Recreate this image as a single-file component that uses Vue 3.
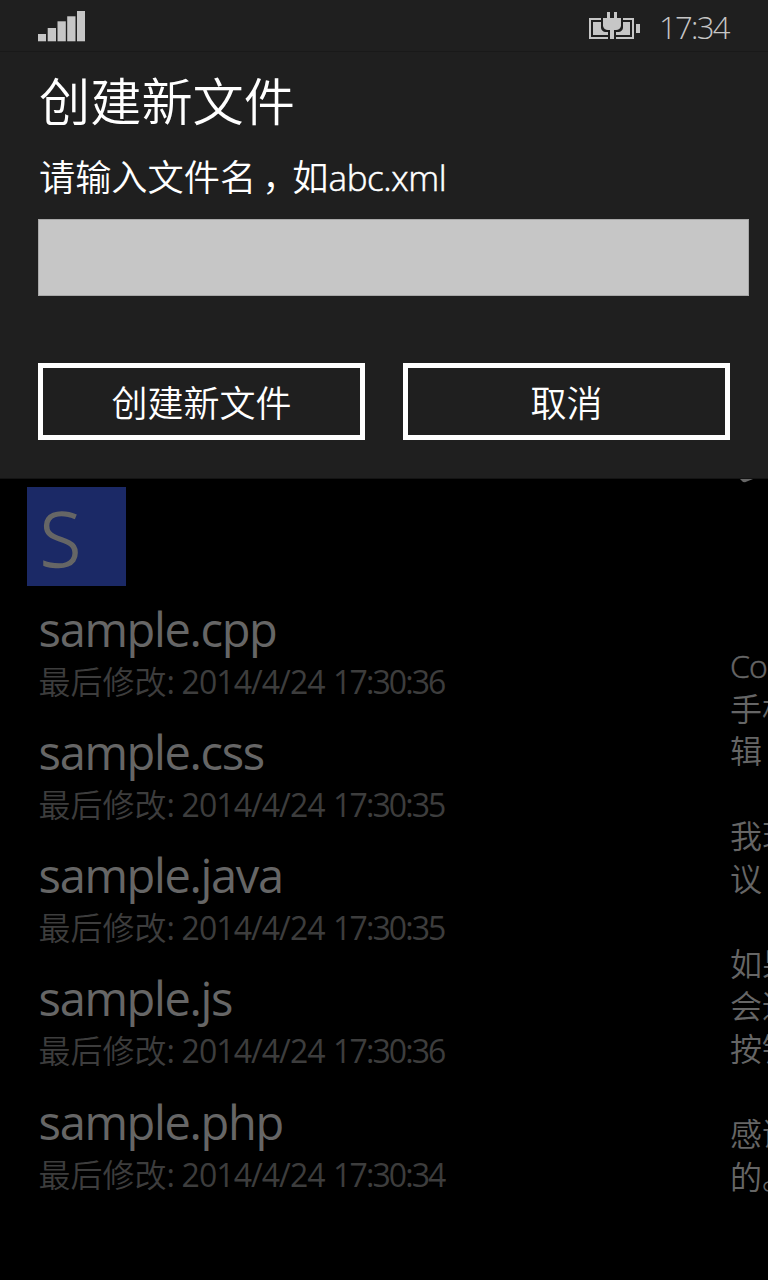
<script setup>
const files = [
  { name: 'sample.cpp', date: '2014/4/24', time: '17:30:36' },
  { name: 'sample.css', date: '2014/4/24', time: '17:30:35' },
  { name: 'sample.java', date: '2014/4/24', time: '17:30:35' },
  { name: 'sample.js', date: '2014/4/24', time: '17:30:36' },
  { name: 'sample.php', date: '2014/4/24', time: '17:30:34' },
]
const about = ['Co', '手机', '辑', '', '我现', '议', '', '如果', '会通', '按钮', '', '感谢', '的。']
</script>

<template>
  <div class="screen">
    <section class="dialog">
      <header class="status">
        <svg class="signal" width="48" height="32" viewBox="0 0 48 32">
          <g fill="#c6c6c6">
            <rect x="0" y="24" width="8" height="7.3" />
            <rect x="9.7" y="18" width="8.3" height="13.3" />
            <rect x="19.5" y="11.3" width="8.3" height="20" />
            <rect x="29.2" y="6.3" width="8.3" height="25" />
            <rect x="39" y="1" width="8" height="30.3" />
          </g>
        </svg>
        <svg class="battery" width="52" height="28" viewBox="0 0 52 28">
          <g fill="#c6c6c6">
            <path d="M0 6H12V8H2V25H19V27H0Z" />
            <path d="M34 6H45V27H27V25H43V8H34Z" />
            <path d="M4 10H12V16Q12.500 19 16 20H19V23H4Z" />
            <path d="M34 10H41V23H27V20H30Q33.500 19 34 16Z" />
            <path d="M18 0H21V6H25V0H28V6H32V14Q31 18 27 18H25V27H21V18H19Q15 18 14 14V6H18Z" />
            <rect x="47" y="12" width="4" height="9" />
          </g>
        </svg>
        <span class="clock">17:34</span>
      </header>
      <h1>创建新文件</h1>
      <p class="hint">请输入文件名<span class="comma">，</span>如<span class="latin">abc.xml</span></p>
      <input class="field" type="text" aria-label="文件名" />
      <div class="actions">
        <button>创建新文件</button>
        <button>取消</button>
      </div>
    </section>

    <main class="page">
      <div class="files">
        <div class="group">S</div>
        <ul>
          <li v-for="f in files" :key="f.name">
            <div class="name">{{ f.name }}</div>
            <div class="meta">
              <span class="label">最后修改<b>:</b></span>
              <span class="date">{{ f.date }}</span>
              <span class="time">{{ f.time }}</span>
            </div>
          </li>
        </ul>
      </div>
      <aside class="next">
        <svg class="tail" width="14" height="4" viewBox="0 0 14 4">
          <path d="M0 0H13L5 3.2L3 3Z" fill="#666" />
        </svg>
        <div class="about">
          <div v-for="(line, i) in about" :key="i" class="line" :class="{ lead: i === 0 }">{{ line }}</div>
        </div>
      </aside>
    </main>
  </div>
</template>

<style>
html,
body {
  background: #000;
}
</style>

<style scoped>
.screen {
  width: 768px;
  height: 1280px;
  overflow: hidden;
  display: flex;
  flex-direction: column;
  background: #000;
  font-family: 'Open Sans', 'Noto Sans CJK SC', sans-serif;
  font-weight: 350;
}
.dialog {
  box-sizing: border-box;
  height: 479px;
  flex: none;
  background: #1f1f1f;
  border-bottom: 1px solid #141414;
  color: #fff;
}
.status {
  box-sizing: border-box;
  height: 52px;
  border-bottom: 1px solid #191919;
  padding: 0 38px;
  display: flex;
  align-items: flex-start;
}
.signal {
  flex: none;
  margin-top: 10px;
}
.battery {
  flex: none;
  margin: 12px 0 0 503px;
}
.clock {
  flex: none;
  margin-left: 18px;
  font-size: 31px;
  line-height: 54px;
  font-weight: 300;
  letter-spacing: -1.7px;
  color: #c6c6c6;
}
h1 {
  margin: 19px 0 0 39px;
  font-size: 51.2px;
  line-height: 60px;
  font-weight: 350;
}
.hint {
  margin: 21px 0 0 39px;
  font-size: 36.2px;
  line-height: 50px;
  height: 50px;
  white-space: nowrap;
}
.comma {
  display: inline-block;
  box-sizing: border-box;
  width: 36.2px;
  padding-left: 6px;
  font-feature-settings: 'halt';
}
.latin {
  font-size: 35px;
  letter-spacing: -0.4px;
  -webkit-text-stroke: 0.5px #fff;
}
.field {
  box-sizing: border-box;
  display: block;
  width: 711px;
  height: 77px;
  margin: 17px 0 0 38px;
  border: 1px solid #a8a8a8;
  border-radius: 0;
  background: #c6c6c6;
}
.actions {
  display: flex;
  gap: 38px;
  margin: 67px 0 0 38px;
}
button {
  box-sizing: border-box;
  width: 327px;
  height: 77px;
  padding: 3px 0 0;
  border: 5px solid #fff;
  background: transparent;
  color: #fff;
  font: 350 36px/66px 'Open Sans', 'Noto Sans CJK SC', sans-serif;
}
.page {
  flex: 1;
  display: flex;
}
.files {
  width: 730px;
  padding-top: 7.5px;
}
.group {
  box-sizing: border-box;
  width: 99px;
  height: 99px;
  margin-left: 27px;
  padding-left: 13px;
  background: #1b2966;
  color: #666;
  font-size: 75px;
  line-height: 103px;
  -webkit-text-stroke: 1.6px #666;
}
ul {
  list-style: none;
  margin: 13px 0 0 38.6px;
  padding: 0;
}
li {
  height: 123.25px;
}
.name {
  font-size: 47px;
  font-weight: 400;
  line-height: 60px;
  letter-spacing: -1.35px;
  color: #666;
}
.meta {
  display: flex;
  font-size: 32px;
  line-height: 45px;
  color: #3d3d3d;
  white-space: nowrap;
}
.label {
  width: 143px;
}
.label b,
.date,
.time {
  font-weight: 400;
}
.date {
  width: 151.5px;
  letter-spacing: -0.95px;
}
.time {
  letter-spacing: -1.9px;
}
.next {
  width: 38px;
  overflow: hidden;
}
.tail {
  display: block;
  margin-left: 10px;
}
.about {
  margin-top: 162px;
  font-size: 32px;
  line-height: 42.55px;
  color: #666;
  white-space: nowrap;
}
.line {
  height: 42.55px;
}
.lead {
  letter-spacing: -0.8px;
  -webkit-text-stroke: 0.5px #666;
}
</style>
